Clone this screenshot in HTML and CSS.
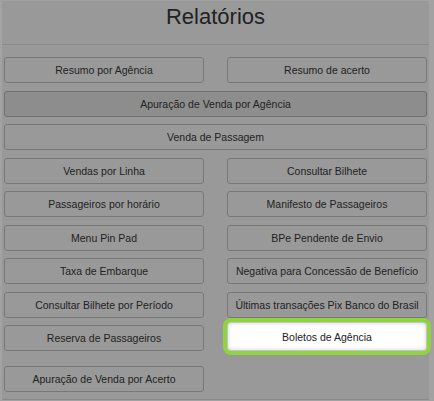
FILE: index.html
```html
<!DOCTYPE html>
<html lang="pt-BR">
<head>
  <meta charset="UTF-8">
  <meta name="viewport" content="width=device-width, initial-scale=1.0">
  <title>Relatórios</title>
  <link rel="stylesheet" href="styles.css">
</head>
<body>
  <div class="modal">
    <div class="modal-header">
      <h1>Relatórios</h1>
    </div>

    <div class="modal-body">
      <div class="report-grid">
        <button class="report-btn">Resumo por Agência</button>
        <button class="report-btn">Resumo de acerto</button>
        <button class="report-btn wide active">Apuração de Venda por Agência</button>
        <button class="report-btn wide">Venda de Passagem</button>
        <button class="report-btn">Vendas por Linha</button>
        <button class="report-btn">Consultar Bilhete</button>
        <button class="report-btn">Passageiros por horário</button>
        <button class="report-btn">Manifesto de Passageiros</button>
        <button class="report-btn">Menu Pin Pad</button>
        <button class="report-btn">BPe Pendente de Envio</button>
        <button class="report-btn">Taxa de Embarque</button>
        <button class="report-btn">Negativa para Concessão de Benefício</button>
        <button class="report-btn">Consultar Bilhete por Período</button>
        <button class="report-btn">Últimas transações Pix Banco do Brasil</button>
        <button class="report-btn">Reserva de Passageiros</button>
        <button class="report-btn highlight">Boletos de Agência</button>
      </div>

      <div class="report-grid extra">
        <button class="report-btn">Apuração de Venda por Acerto</button>
      </div>
    </div>
  </div>
</body>
</html>
```

FILE: styles.css
```css
body {
  margin: 0;
  padding: 1px 5px 0 2px;
  background: #a2a2a2;
  font-family: "Liberation Sans", Arial, sans-serif;
  height: 400px;
  overflow: hidden;
}
.modal {
  background: #999;
  height: 399px;
  box-sizing: border-box;
  border-bottom: 1px solid #8a8a8a;
}
.modal-header {
  padding: 3px 0 14px;
  border-bottom: 1px solid #8b8b8b;
}
h1 {
  margin: 0;
  text-align: center;
  font-size: 22px;
  line-height: 26px;
  font-weight: normal;
  color: #222;
}
.modal-body {
  padding: 12px 0 0 2px;
}
.report-grid {
  display: grid;
  grid-template-columns: 200px 200px;
  grid-auto-rows: 26px;
  column-gap: 23px;
  row-gap: 7.5px;
}
.report-grid.extra {
  margin-top: 15px;
}
.report-btn {
  font-family: inherit;
  font-size: 10.5px;
  color: #222;
  background: #999;
  border: 1px solid #787878;
  border-radius: 3px;
  padding: 0 4px;
  white-space: nowrap;
}
.report-btn.wide {
  grid-column: 1 / 3;
}
.report-btn.active {
  background: #8d8d8d;
  border-color: #6e6e6e;
}
.report-btn.highlight {
  margin-top: -3px;
  height: 29px;
  background: #fff;
  border-color: #c4c4c4;
  border-radius: 4px;
  box-shadow: inset 0 0 4px rgba(0, 0, 0, 0.18), 0 0 0 4px #8fd43f;
}
```
